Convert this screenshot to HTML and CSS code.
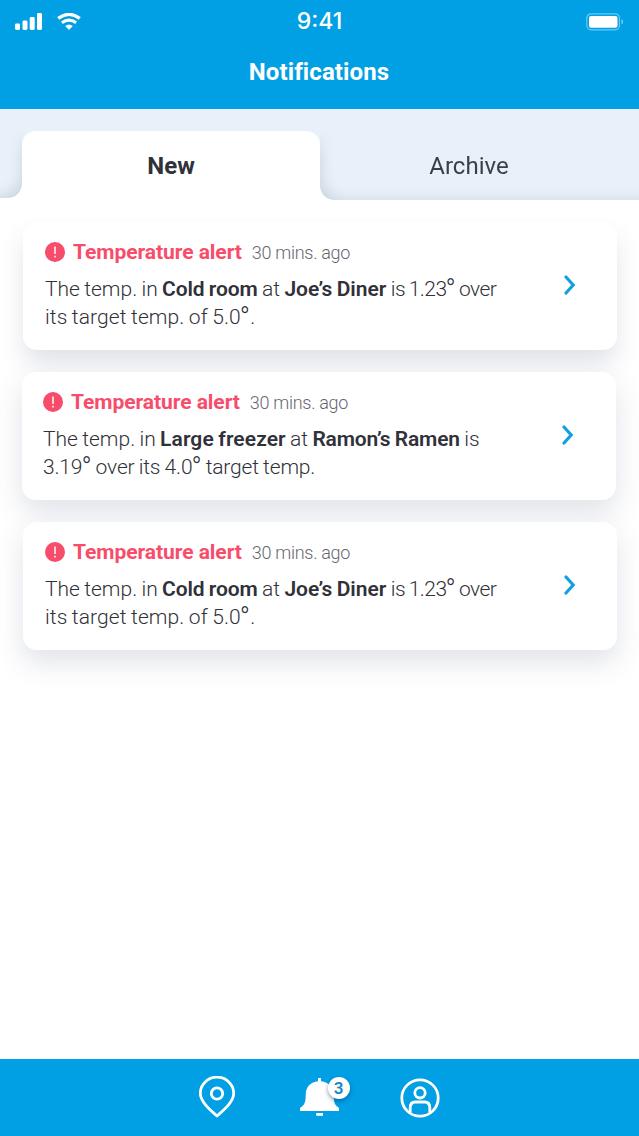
FILE: index.html
```html
<!DOCTYPE html>
<html lang="en">
<head>
    <meta charset="UTF-8">
    <title>Notifications</title>
    <link rel="stylesheet" href="styles.css">
</head>
<body>
<div class="app">
    <header class="header">
        <div class="status">
            <div class="status-left">
                <svg class="signal" width="27" height="17" viewBox="0 0 27 17">
                    <rect x="0" y="10.5" width="5" height="6.5" rx="1.4"/>
                    <rect x="7.5" y="7.5" width="5" height="9.5" rx="1.4"/>
                    <rect x="14.7" y="4" width="5" height="13" rx="1.4"/>
                    <rect x="22" y="0" width="5" height="17" rx="1.4"/>
                </svg>
                <svg class="wifi" width="24" height="17" viewBox="0 0 24 17">
                    <path d="M1.2 5.4Q12-2.6 22.8 5.4" stroke-width="3.3"/>
                    <path d="M4.9 9.8Q12 4.4 19.1 9.8" stroke-width="3"/>
                    <path class="dot" d="M8.2 13.1Q12 10 15.8 13.1L12 17Z"/>
                </svg>
            </div>
            <div class="time">9:41</div>
            <svg class="battery" width="38" height="18" viewBox="0 0 38 18">
                <rect class="frame" x=".8" y=".8" width="32.6" height="16" rx="4.2"/>
                <rect x="3" y="3" width="28.5" height="11.8" rx="2"/>
                <path class="cap" d="M35.5 6v5.5q1.6-.7 1.6-2.7t-1.6-2.8z"/>
            </svg>
        </div>
        <h1 class="title">Notifications</h1>
    </header>

    <nav class="tabs">
        <div class="edge-left"></div>
        <a class="tab active">New</a>
        <a class="tab"><span class="archive">Archive</span></a>
    </nav>

    <main class="list">
        <article class="card">
            <div class="card-body">
                <div class="card-head">
                    <svg class="alert" width="20" height="20" viewBox="0 0 20 20">
                        <circle cx="10" cy="10" r="10"/>
                        <path d="M10 4.5v7.5M10 13.7v1.8"/>
                    </svg>
                    <h2>Temperature alert</h2>
                    <time>30 mins. ago</time>
                </div>
                <p>The temp. in <b class="room">Cold room</b> at <b class="diner">Joe’s Diner</b> <span class="over">is 1.23<i>°</i> over</span><br><span class="target">its target temp. of 5.0<i>°</i>.</span></p>
            </div>
            <svg class="chevron" width="12" height="20" viewBox="0 0 12 20"><path d="M2 2l7.2 8L2 18"/></svg>
        </article>

        <article class="card middle">
            <div class="card-body">
                <div class="card-head">
                    <svg class="alert" width="20" height="20" viewBox="0 0 20 20">
                        <circle cx="10" cy="10" r="10"/>
                        <path d="M10 4.5v7.5M10 13.7v1.8"/>
                    </svg>
                    <h2>Temperature alert</h2>
                    <time>30 mins. ago</time>
                </div>
                <p>The temp. in <b class="freezer">Large freezer</b> at <b class="ramen">Ramon’s Ramen</b> is<br><span class="range">3.19<i>°</i> over its 4.0<i>°</i> target temp.</span></p>
            </div>
            <svg class="chevron" width="12" height="20" viewBox="0 0 12 20"><path d="M2 2l7.2 8L2 18"/></svg>
        </article>

        <article class="card">
            <div class="card-body">
                <div class="card-head">
                    <svg class="alert" width="20" height="20" viewBox="0 0 20 20">
                        <circle cx="10" cy="10" r="10"/>
                        <path d="M10 4.5v7.5M10 13.7v1.8"/>
                    </svg>
                    <h2>Temperature alert</h2>
                    <time>30 mins. ago</time>
                </div>
                <p>The temp. in <b class="room">Cold room</b> at <b class="diner">Joe’s Diner</b> <span class="over">is 1.23<i>°</i> over</span><br><span class="target">its target temp. of 5.0<i>°</i>.</span></p>
            </div>
            <svg class="chevron" width="12" height="20" viewBox="0 0 12 20"><path d="M2 2l7.2 8L2 18"/></svg>
        </article>
    </main>

    <footer class="bottom">
        <svg class="pin" width="36" height="42" viewBox="0 0 36 42">
            <path d="M18 40C12 34.5 1.3 26 1.3 17.2a16.7 16 0 0 1 33.4 0C34.7 26 24 34.5 18 40z"/>
            <circle cx="18" cy="17.5" r="5.7"/>
        </svg>
        <div class="bell-wrap">
            <svg class="bell" width="40" height="38" viewBox="0 0 40 38">
                <path d="M18 0h3v3.3c8 .8 12.7 6.2 12.7 13.7 0 7 .8 10 5.3 13v3H0v-3c4.7-3 5.7-6 5.7-13C5.7 9.500 10 4.1 18 3.3z"/>
                <path d="M16.2 35h6.8v2.8h-6.8z"/>
            </svg>
            <span class="badge">3</span>
        </div>
        <svg class="user" width="40" height="40" viewBox="0 0 40 40">
            <circle cx="20" cy="20" r="18.2"/>
            <circle cx="20" cy="14.8" r="5.2"/>
            <path d="M10.2 34.5v-4.5q0-6 5-6h9.6q5 0 5 6v4.500"/>
        </svg>
    </footer>
</div>
</body>
</html>
```
FILE: styles.css
```css
* {
    margin: 0;
    padding: 0;
    box-sizing: border-box;
}

body {
    background: #fff;
    font-family: Roboto, "Liberation Sans", sans-serif;
    color: #303139;
}

.app {
    width: 639px;
    height: 1136px;
    display: flex;
    flex-direction: column;
    overflow: hidden;
}

/* header */
.header {
    height: 109px;
    flex: none;
    background: #019fe4;
    color: #fff;
}

.status {
    height: 43px;
    padding: 0 15px;
    display: grid;
    grid-template-columns: 1fr auto 1fr;
    align-items: center;
}

.status-left {
    display: flex;
    gap: 15px;
}

.signal, .battery {
    fill: #fff;
}

.wifi path {
    fill: none;
    stroke: #fff;
}

.wifi .dot {
    fill: #fff;
    stroke: none;
}

.time {
    height: 43px;
    font-family: Inter, sans-serif;
    font-size: 23px;
    line-height: 43px;
    font-weight: 500;
}

.battery {
    justify-self: end;
}

.battery .frame {
    fill: none;
    stroke: #6cc8f0;
    stroke-width: 1.2;
}

.battery .cap {
    fill: #7ccdf1;
}

.title {
    padding: 14px 1px 0 0;
    font-size: 24px;
    line-height: 30px;
    font-weight: 700;
    letter-spacing: 0.1px;
    text-align: center;
}

/* tabs */
.tabs {
    height: 91px;
    flex: none;
    padding-top: 22px;
    display: flex;
    background: linear-gradient(#e8f0f9 50px, #fff 50px);
}

.edge-left {
    width: 22px;
    height: 67px;
    background: #e8f0f9;
    border-radius: 0 0 14px 0;
    box-shadow: inset -12px -12px 14px -13px rgba(80, 90, 110, .2);
    mask-image: linear-gradient(transparent, #000 26px);
}

.tab {
    flex: 1;
    line-height: 70px;
    font-size: 24px;
    text-align: center;
    background: #e8f0f9;
    border-radius: 0 0 0 14px;
    box-shadow: inset 13px -11px 14px -13px rgba(80, 90, 110, .2);
    mask-image: linear-gradient(transparent, #000 26px);
}

.tab.active {
    flex: none;
    width: 298px;
    font-weight: 700;
    background: #fff;
    border-radius: 14px 14px 0 0;
    box-shadow: none;
    mask-image: none;
}

.archive {
    margin-right: 21px;
    color: #3b3f4a;
}

/* cards */
.list {
    flex: 1;
    padding: 22px 22px 0 23px;
    display: flex;
    flex-direction: column;
    gap: 22px;
}

.card {
    height: 128px;
    flex: none;
    padding: 19px 41px 0 22px;
    display: flex;
    justify-content: space-between;
    background: #fff;
    border-radius: 14px;
    box-shadow: 0 12px 28px rgba(70, 85, 120, .17);
}

.card:first-child {
    box-shadow: 0 14px 24px -2px rgba(70, 85, 120, .18);
}

.middle {
    margin-left: -1px;
    margin-right: 1px;
    padding-left: 21px;
    padding-right: 42px;
}

.card-head {
    height: 22px;
    display: flex;
    align-items: center;
}

.alert circle {
    fill: #f84c6b;
}

.alert path {
    stroke: #fff;
    stroke-width: 1.5;
}

h2 {
    margin-left: 8px;
    font-size: 21px;
    line-height: 22px;
    font-weight: 700;
    letter-spacing: -0.05px;
    color: #f84c6b;
}

time {
    margin-left: 10px;
    padding-top: 1px;
    font-size: 18px;
    line-height: 24px;
    font-weight: 300;
    letter-spacing: -0.3px;
    color: #666770;
}

.card p {
    margin-top: 12px;
    font-size: 21px;
    line-height: 28px;
    font-weight: 300;
    word-spacing: -0.8px;
    white-space: nowrap;
}

.card b {
    font-weight: 600;
}

/* larger, raised degree sign */
.card i {
    margin-left: -1px;
    font-style: normal;
    font-size: 27px;
    line-height: 1px;
    vertical-align: -3px;
}

.room {
    letter-spacing: -0.1px;
}

.freezer {
    letter-spacing: 0.1px;
}

.ramen {
    letter-spacing: -0.15px;
}

.over {
    letter-spacing: -0.55px;
}

.target {
    letter-spacing: 0.1px;
}

.range {
    letter-spacing: -0.15px;
}

.chevron {
    margin-top: 34px;
}

.chevron path {
    fill: none;
    stroke: #149fdf;
    stroke-width: 3.2;
    stroke-linecap: round;
}

/* bottom bar */
.bottom {
    height: 77px;
    flex: none;
    padding: 0 199px;
    display: flex;
    justify-content: space-between;
    align-items: center;
    background: #019fe4;
}

.pin, .user {
    fill: none;
    stroke: #fff;
    stroke-width: 2.8;
    stroke-linejoin: round;
}

.pin {
    margin-bottom: 2px;
}

.bell-wrap {
    position: relative;
    height: 38px;
    margin: 0 0 2px 4px;
}

.bell {
    fill: #fff;
}

.badge {
    position: absolute;
    left: 28px;
    top: -1px;
    width: 22px;
    height: 22px;
    border-radius: 50%;
    background: #fff;
    color: #1489c6;
    font-size: 17px;
    line-height: 22px;
    font-weight: 600;
    text-align: center;
    box-shadow: 0 2px 4px rgba(0, 60, 110, .5);
}
```
